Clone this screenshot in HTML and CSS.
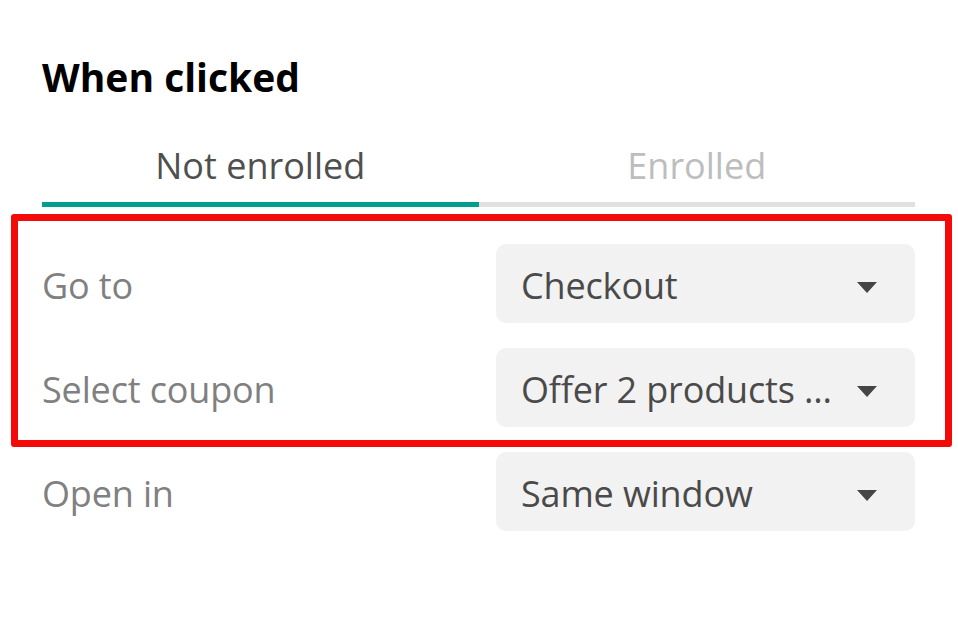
FILE: index.html
```html
<!DOCTYPE html>
<html lang="en">
<head>
<meta charset="utf-8">
<title>When clicked</title>
<link rel="stylesheet" href="styles.css">
</head>
<body>
<div class="panel">
  <h1 class="title">When clicked</h1>
  <div class="tabs">
    <div class="tab tab-active">Not enrolled</div>
    <div class="tab">Enrolled</div>
  </div>
  <div class="highlight">
    <div class="row">
      <div class="label">Go to</div>
      <div class="select"><span class="value">Checkout</span><svg class="caret" width="20" height="11" viewBox="0 0 20 11"><path d="M0 0H20L10 11Z"/></svg></div>
    </div>
    <div class="row">
      <div class="label">Select coupon</div>
      <div class="select"><span class="value">Offer 2 products ...</span><svg class="caret" width="20" height="11" viewBox="0 0 20 11"><path d="M0 0H20L10 11Z"/></svg></div>
    </div>
  </div>
  <div class="row row-last">
    <div class="label">Open in</div>
    <div class="select"><span class="value">Same window</span><svg class="caret" width="20" height="11" viewBox="0 0 20 11"><path d="M0 0H20L10 11Z"/></svg></div>
  </div>
</div>
</body>
</html>
```

FILE: styles.css
```css
* { box-sizing: border-box; }
html, body { margin: 0; padding: 0; background: #fff; }
body { font-family: "Open Sans", "Noto Sans", sans-serif; }
.panel { width: 873px; margin-left: 42px; padding-top: 53px; }
.title { margin: 0; font-size: 39px; font-weight: 700; line-height: 48px; color: #000; }
.tabs { display: grid; grid-template-columns: 1fr 1fr; margin-top: 43px; }
.tab { text-align: center; font-size: 36px; line-height: 44px; color: #bdbdbd; padding-bottom: 14px; border-bottom: 5px solid #e0e0e0; }
.tab-active { color: #4f4f4f; border-bottom-color: #009e8f; }
.highlight { margin: 7px -37px 0 -31px; padding: 23px 30px 13px 24px; border: 7px solid #f50a0a; border-radius: 3px; display: flex; flex-direction: column; gap: 25px; }
.row { display: flex; align-items: center; justify-content: space-between; }
.row-last { margin-top: 5px; }
.label { font-size: 36px; line-height: 49px; padding-top: 3px; color: #808080; letter-spacing: -0.15px; }
.select { width: 419px; height: 79px; background: #f2f2f2; border-radius: 10px; display: flex; align-items: center; justify-content: space-between; padding: 3px 38px 0 25px; }
.value { font-size: 36px; line-height: 49px; color: #4a4a4a; letter-spacing: -0.15px; }
.caret { fill: #454545; margin-top: 5px; }
```
